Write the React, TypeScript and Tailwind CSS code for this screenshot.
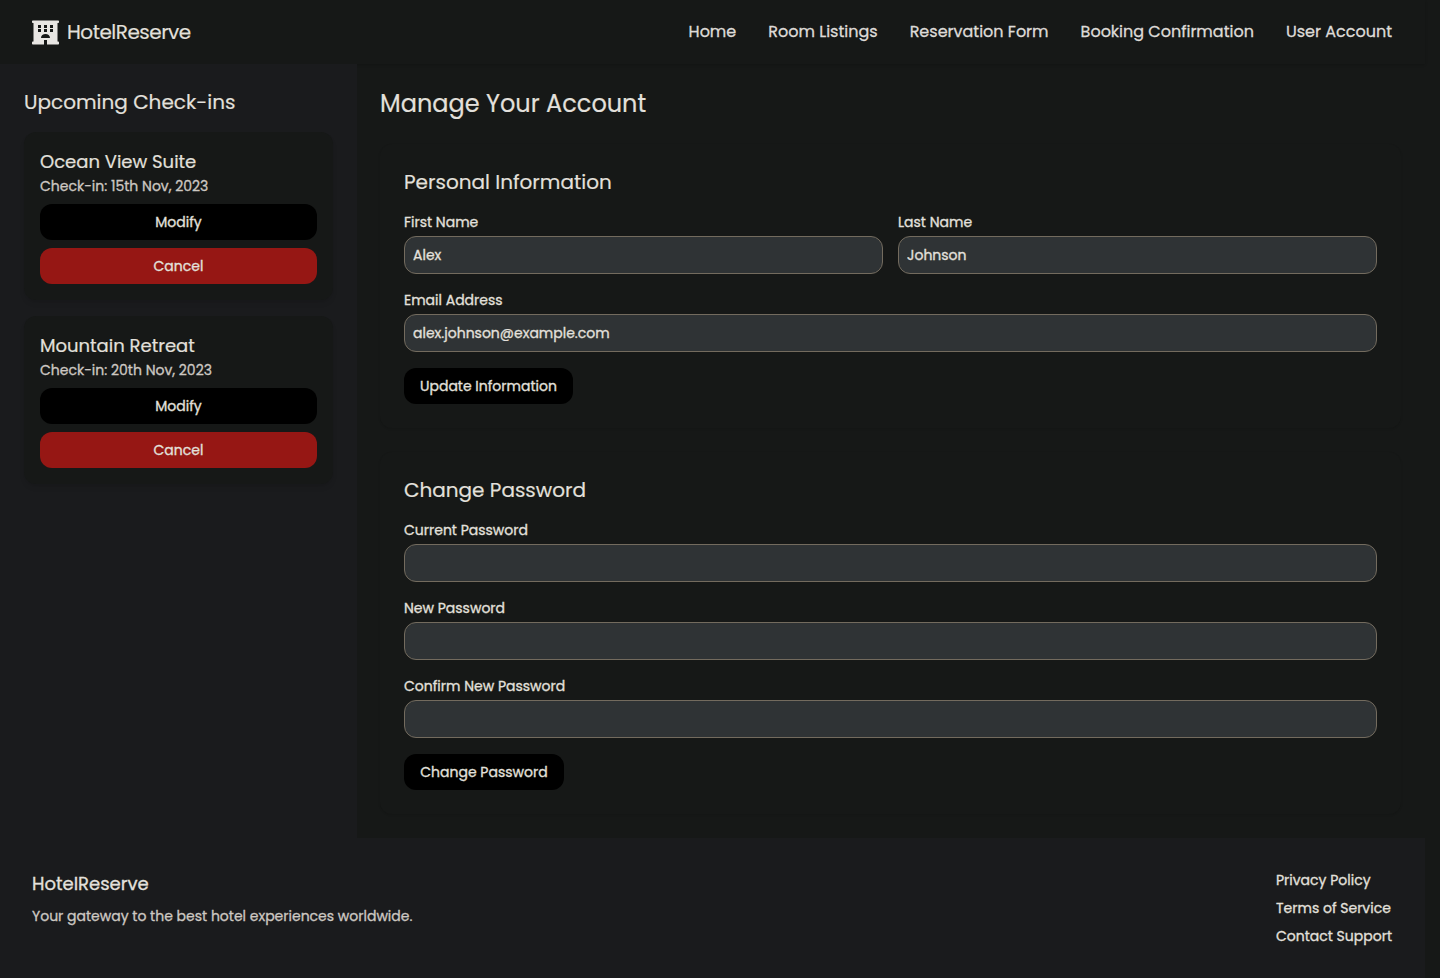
import React from 'react';

const navItems = ['Home', 'Room Listings', 'Reservation Form', 'Booking Confirmation', 'User Account'];

const checkIns = [
  { room: 'Ocean View Suite', date: 'Check-in: 15th Nov, 2023' },
  { room: 'Mountain Retreat', date: 'Check-in: 20th Nov, 2023' },
];

const footerLinks = ['Privacy Policy', 'Terms of Service', 'Contact Support'];

type FieldProps = {
  label: string;
  type?: string;
  value?: string;
};

function HotelIcon() {
  return (
    <svg viewBox="0 0 27 25" className="mt-px h-[25px] w-[27px] fill-[#e8e6e3]" aria-hidden="true">
      <path
        fillRule="evenodd"
        d="M.8.4h25.4q.8 0 .8.8v1q0 .8-.8.8h-.7v18.6h.7q.8 0 .8.8v1.4q0 .8-.8.8H15V20h-3v4.6H.8q-.8 0-.8-.8v-1.4q0-.8.8-.8h.7V3H.8Q0 3 0 2.2v-1Q0 .4.8.4zM6 5h3v3H6zM12 5h3v3h-3zM18 5h3v3h-3zM6 9h3v3H6zM12 9h3v3h-3zM18 9h3v3h-3zM9 18c0-2.4 2-4 4.5-4s4.5 1.6 4.5 4z"
      />
    </svg>
  );
}

function Field({ label, type = 'text', value = '' }: FieldProps) {
  return (
    <label className="block">
      <span className="block text-sm">{label}</span>
      <input
        type={type}
        defaultValue={value}
        className="mt-1 block h-[38px] w-full rounded-xl border border-[#736b5e] bg-[#2f3335] px-2 text-sm outline-none"
      />
    </label>
  );
}

function Header() {
  return (
    <header className="flex h-16 items-center justify-between bg-[#161817] pl-8 pr-[33px] shadow-sm">
      <div className="flex items-center gap-2">
        <HotelIcon />
        <span className="text-xl tracking-tight [-webkit-text-stroke:0.15px]">HotelReserve</span>
      </div>
      <nav className="flex gap-8">
        {navItems.map((label) => (
          <a key={label} href="#" className="whitespace-nowrap text-[#dedbd7]">
            {label}
          </a>
        ))}
      </nav>
    </header>
  );
}

function Sidebar() {
  return (
    <aside className="w-[357px] shrink-0 bg-[#1a1b1d] p-6">
      <h2 className="mb-4 text-xl [-webkit-text-stroke:0.15px]">Upcoming Check-ins</h2>
      <div className="flex flex-col gap-4">
        {checkIns.map((item) => (
          <div key={item.room} className="rounded-xl bg-[#161817] p-4 shadow-md shadow-black/7">
            <h3 className="text-lg leading-7 [-webkit-text-stroke:0.2px]">{item.room}</h3>
            <p className="text-sm text-[#cdc8c2]">{item.date}</p>
            <button className="mt-2 block w-full rounded-xl bg-black py-2 text-sm">Modify</button>
            <button className="mt-2 block w-full rounded-xl bg-[#961714] py-2 text-sm">Cancel</button>
          </div>
        ))}
      </div>
    </aside>
  );
}

function Account() {
  return (
    <main className="flex grow flex-col gap-6 py-6 pl-[23px] pr-6">
      <h1 className="text-2xl [-webkit-text-stroke:0.15px]">Manage Your Account</h1>
      <section className="rounded-xl bg-[#161817] p-6 shadow-sm shadow-black/5">
        <h2 className="mb-4 text-xl [-webkit-text-stroke:0.15px]">Personal Information</h2>
        <div className="grid grid-cols-2 gap-x-[15px] gap-y-4">
          <Field label="First Name" value="Alex" />
          <Field label="Last Name" value="Johnson" />
          <div className="col-span-2">
            <Field label="Email Address" value="alex.johnson@example.com" />
          </div>
        </div>
        <button className="mt-4 block rounded-xl bg-black px-4 py-2 text-sm">Update Information</button>
      </section>
      <section className="rounded-xl bg-[#161817] p-6 shadow-sm shadow-black/5">
        <h2 className="mb-4 text-xl [-webkit-text-stroke:0.15px]">Change Password</h2>
        <div className="flex flex-col gap-4">
          <Field label="Current Password" type="password" />
          <Field label="New Password" type="password" />
          <Field label="Confirm New Password" type="password" />
        </div>
        <button className="mt-4 block w-40 whitespace-nowrap rounded-xl bg-black py-2 text-sm">Change Password</button>
      </section>
    </main>
  );
}

function Footer() {
  return (
    <footer className="flex h-[140px] justify-between bg-[#1a1b1d] py-8 pl-8 pr-[33px]">
      <div>
        <h3 className="text-lg leading-7">HotelReserve</h3>
        <p className="mt-2 text-sm text-[#cdc8c2]">Your gateway to the best hotel experiences worldwide.</p>
      </div>
      <div className="flex flex-col gap-2">
        {footerLinks.map((label) => (
          <a key={label} href="#" className="whitespace-nowrap text-sm">
            {label}
          </a>
        ))}
      </div>
    </footer>
  );
}

export default function App() {
  return (
    <div className="min-h-screen bg-[#161817] pr-[15px] font-['Poppins',Inter,sans-serif] text-[#e3e0dc] [-webkit-text-stroke:0.3px]">
      <Header />
      <div className="flex">
        <Sidebar />
        <Account />
      </div>
      <Footer />
    </div>
  );
}
